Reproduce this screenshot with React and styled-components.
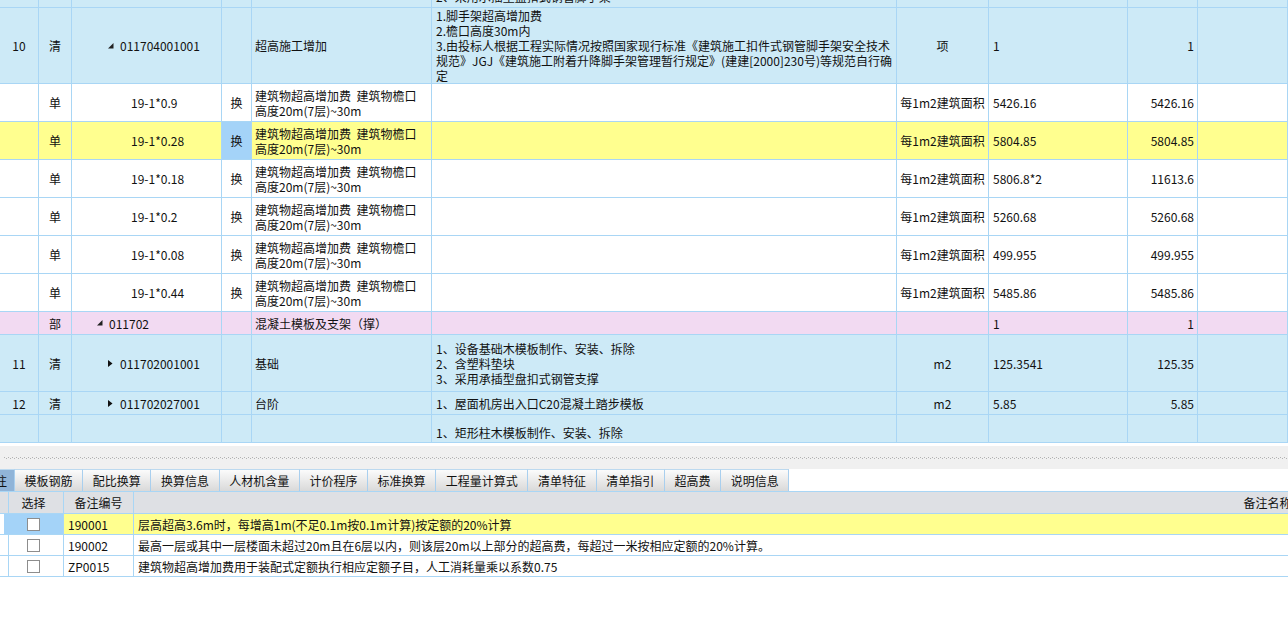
import React from 'react';
import styled, { createGlobalStyle } from 'styled-components';

const BORDER = '#a9d6f5';
const BLUE = '#cdeaf7';
const YELLOW = '#ffff8f';
const PINK = '#f2daf2';
const WHITE = '#ffffff';
const SEL = '#a4d3f8';

const Global = createGlobalStyle`
  html, body { margin: 0; padding: 0; background: #fff; overflow: hidden; }
  body {
    font-family: "Noto Sans CJK SC", "Noto Sans", sans-serif;
    font-size: 12px;
    color: #111;
  }
  * { box-sizing: border-box; }
`;

const Page = styled.div`
  width: 1288px;
  height: 629px;
  overflow: hidden;
  display: flex;
  flex-direction: column;
  background: #fff;
`;

const GridViewport = styled.div`
  height: 443px;
  flex: none;
  overflow: hidden;
  border-bottom: 1px solid ${BORDER};
`;

const COLS = '39px 33px 150px 30px 180px 465px 92px 139px 70px 1fr';

const Row = styled.div`
  display: grid;
  grid-template-columns: ${COLS};
  height: ${p => p.$h}px;
  background: ${p => p.$bg};
`;

const justify = { left: 'flex-start', center: 'center', right: 'flex-end' };

const Cell = styled.div`
  display: flex;
  align-items: ${p => p.$valign || 'center'};
  justify-content: ${p => justify[p.$align || 'left']};
  padding: 0 ${p => (p.$pr ?? 3)}px 0 ${p => (p.$pl ?? 3)}px;
  border-right: 1px solid ${BORDER};
  border-bottom: 1px solid ${BORDER};
  background: ${p => p.$bg || 'transparent'};
  overflow: hidden;
  white-space: nowrap;
  min-width: 0;
  line-height: 15px;
`;

const Lines = styled.div`
  line-height: 15px;
  white-space: pre;
  margin-bottom: ${p => (p.$clipped ? '3px' : '0')};
`;

const IconSlot = styled.span`
  display: inline-flex;
  align-items: center;
  width: 12px;
  flex: none;
`;

const Code = styled.div`
  display: flex;
  align-items: center;
  padding-left: ${p => 25 + p.$level * 11}px;
`;

const OpenTri = () => (
  <svg width="6" height="6" viewBox="0 0 6 6"><polygon points="5.5,0 5.5,5.5 0,5.5" fill="#222" /></svg>
);
const ClosedTri = () => (
  <svg width="5" height="7" viewBox="0 0 5 7"><polygon points="0,0 4.5,3.5 0,7" fill="#111" /></svg>
);

const Splitter = styled.div`
  flex: none;
  margin-top: 3px;
  height: 23px;
  background: #f0f0f0;
  display: flex;
  align-items: center;
  padding-left: 4px;
`;

const Dots = styled.div`
  flex: 1;
  height: 2px;
  background-image:
    repeating-linear-gradient(90deg, #b2b2b2 0 1px, transparent 1px 4px),
    repeating-linear-gradient(90deg, transparent 0 2px, #b2b2b2 2px 3px, transparent 3px 4px);
  background-size: 100% 1px, 100% 1px;
  background-position: 0 0, 0 1px;
  background-repeat: no-repeat;
`;

const TabBar = styled.div`
  flex: none;
  height: 22px;
  display: flex;
  background: #fff;
`;

const Tab = styled.div`
  height: 22px;
  display: flex;
  align-items: center;
  justify-content: ${p => (p.$clip ? 'flex-end' : 'center')};
  width: ${p => (p.$clip ? '15px' : 'auto')};
  overflow: hidden;
  white-space: nowrap;
  padding: ${p => (p.$clip ? '0 7px 0 0' : '0 9.6px')};
  border-top: 1px solid #bcd9ef;
  border-right: 1px solid #a9cfee;
  background: ${p => (p.$active ? '#90b4d8' : 'linear-gradient(#fbfbfb, #d9d9d9)')};
  font-size: 12px;
  color: #111;
`;

const BottomViewport = styled.div`
  flex: none;
  overflow: hidden;
  border-top: 1px solid ${BORDER};
`;

const BCOLS = '4px 60px 70px 2268px';

const BRow = styled.div`
  display: grid;
  grid-template-columns: ${BCOLS};
  width: 2402px;
  height: ${p => p.$h}px;
  background: ${p => p.$bg};
`;

const BCell = styled.div`
  display: flex;
  align-items: center;
  justify-content: ${p => justify[p.$align || 'left']};
  padding: 0 4px;
  border-right: 1px solid ${BORDER};
  border-bottom: 1px solid ${BORDER};
  background: ${p => p.$bg || 'transparent'};
  white-space: nowrap;
  overflow: hidden;
  font-size: 12px;
`;

const Check = styled.span`
  width: 13px;
  height: 13px;
  border: 1px solid #8d8d8d;
  background: #fff;
  display: inline-block;
`;

const nameLines = ['建筑物超高增加费\u00a0\u00a0建筑物檐口', '高度20m(7层)~30m'];

const rows = [
  { h: 8, bg: BLUE, partial: true, desc: ['2、采用承插型盘扣式钢管脚手架'] },
  {
    h: 76, bg: BLUE, no: '10', type: '清', code: '011704001001', level: 1, icon: 'open',
    name: ['超高施工增加'],
    desc: [
      '1.脚手架超高增加费',
      '2.檐口高度30m内',
      '3.由投标人根据工程实际情况按照国家现行标准《建筑施工扣件式钢管脚手架安全技术',
      '规范》JGJ《建筑施工附着升降脚手架管理暂行规定》(建建[2000]230号)等规范自行确',
      '定',
    ],
    unit: '项', expr: '1', qty: '1',
  },
  { h: 38, bg: WHITE, type: '单', code: '19-1*0.9', level: 2, huan: '换', name: nameLines, unit: '每1m2建筑面积', expr: '5426.16', qty: '5426.16' },
  { h: 38, bg: YELLOW, type: '单', code: '19-1*0.28', level: 2, huan: '换', huanSel: true, name: nameLines, unit: '每1m2建筑面积', expr: '5804.85', qty: '5804.85' },
  { h: 38, bg: WHITE, type: '单', code: '19-1*0.18', level: 2, huan: '换', name: nameLines, unit: '每1m2建筑面积', expr: '5806.8*2', qty: '11613.6' },
  { h: 38, bg: WHITE, type: '单', code: '19-1*0.2', level: 2, huan: '换', name: nameLines, unit: '每1m2建筑面积', expr: '5260.68', qty: '5260.68' },
  { h: 38, bg: WHITE, type: '单', code: '19-1*0.08', level: 2, huan: '换', name: nameLines, unit: '每1m2建筑面积', expr: '499.955', qty: '499.955' },
  { h: 38, bg: WHITE, type: '单', code: '19-1*0.44', level: 2, huan: '换', name: nameLines, unit: '每1m2建筑面积', expr: '5485.86', qty: '5485.86' },
  { h: 23, bg: PINK, type: '部', code: '011702', level: 0, icon: 'open', name: ['混凝土模板及支架（撑）'], expr: '1', qty: '1' },
  {
    h: 57, bg: BLUE, no: '11', type: '清', code: '011702001001', level: 1, icon: 'closed', name: ['基础'],
    desc: ['1、设备基础木模板制作、安装、拆除', '2、含塑料垫块', '3、采用承插型盘扣式钢管支撑'],
    unit: 'm2', expr: '125.3541', qty: '125.35',
  },
  {
    h: 23, bg: BLUE, no: '12', type: '清', code: '011702027001', level: 1, icon: 'closed', name: ['台阶'],
    desc: ['1、屋面机房出入口C20混凝土踏步模板'], unit: 'm2', expr: '5.85', qty: '5.85',
  },
  { h: 36, bg: BLUE, desc: ['1、矩形柱木模板制作、安装、拆除'] },
];

const renderLines = (arr, clipped) =>
  arr ? (
    <Lines $clipped={clipped}>
      {arr.map((l, i) => (
        <React.Fragment key={i}>
          {i > 0 && <br />}
          {l}
        </React.Fragment>
      ))}
    </Lines>
  ) : null;

const TopRow = ({ r }) => (
  <Row $h={r.h} $bg={r.bg}>
    <Cell $align="center">{r.no}</Cell>
    <Cell $align="center">{r.type}</Cell>
    <Cell $pl={0}>
      {r.code && (
        <Code $level={r.level}>
          <IconSlot>{r.icon === 'open' ? <OpenTri /> : r.icon === 'closed' ? <ClosedTri /> : null}</IconSlot>
          {r.code}
        </Code>
      )}
    </Cell>
    <Cell $align="center" $bg={r.huanSel ? SEL : undefined}>{r.huan}</Cell>
    <Cell>{renderLines(r.name)}</Cell>
    <Cell $pl={4} $valign={r.partial ? 'flex-end' : 'center'}>{renderLines(r.desc, r.partial)}</Cell>
    <Cell $align="center" $pl={2} $pr={2}>{r.unit}</Cell>
    <Cell $pl={4}>{r.expr}</Cell>
    <Cell $align="right" $pr={3}>{r.qty}</Cell>
    <Cell />
  </Row>
);

const tabs = ['模板钢筋', '配比换算', '换算信息', '人材机含量', '计价程序', '标准换算', '工程量计算式', '清单特征', '清单指引', '超高费', '说明信息'];

const notes = [
  { code: '190001', text: '层高超高3.6m时，每增高1m(不足0.1m按0.1m计算)按定额的20%计算', sel: true },
  { code: '190002', text: '最高一层或其中一层楼面未超过20m且在6层以内，则该层20m以上部分的超高费，每超过一米按相应定额的20%计算。' },
  { code: 'ZP0015', text: '建筑物超高增加费用于装配式定额执行相应定额子目，人工消耗量乘以系数0.75' },
];

export default function App() {
  return (
    <Page>
      <Global />
      <GridViewport>
        {rows.map((r, i) => (
          <TopRow key={i} r={r} />
        ))}
      </GridViewport>
      <Splitter>
        <Dots />
      </Splitter>
      <TabBar>
        <Tab $active $clip>备注</Tab>
        {tabs.map(t => (
          <Tab key={t}>{t}</Tab>
        ))}
      </TabBar>
      <BottomViewport>
        <BRow $h={22} $bg="#dee0e4">
          <BCell />
          <BCell $align="center">选择</BCell>
          <BCell $align="center">备注编号</BCell>
          <BCell $align="center">备注名称</BCell>
        </BRow>
        {notes.map(n => (
          <BRow key={n.code} $h={21} $bg={n.sel ? YELLOW : WHITE}>
            <BCell $bg={WHITE} />
            <BCell $align="center" $bg={n.sel ? SEL : undefined}>
              <Check />
            </BCell>
            <BCell>{n.code}</BCell>
            <BCell>{n.text}</BCell>
          </BRow>
        ))}
      </BottomViewport>
    </Page>
  );
}
